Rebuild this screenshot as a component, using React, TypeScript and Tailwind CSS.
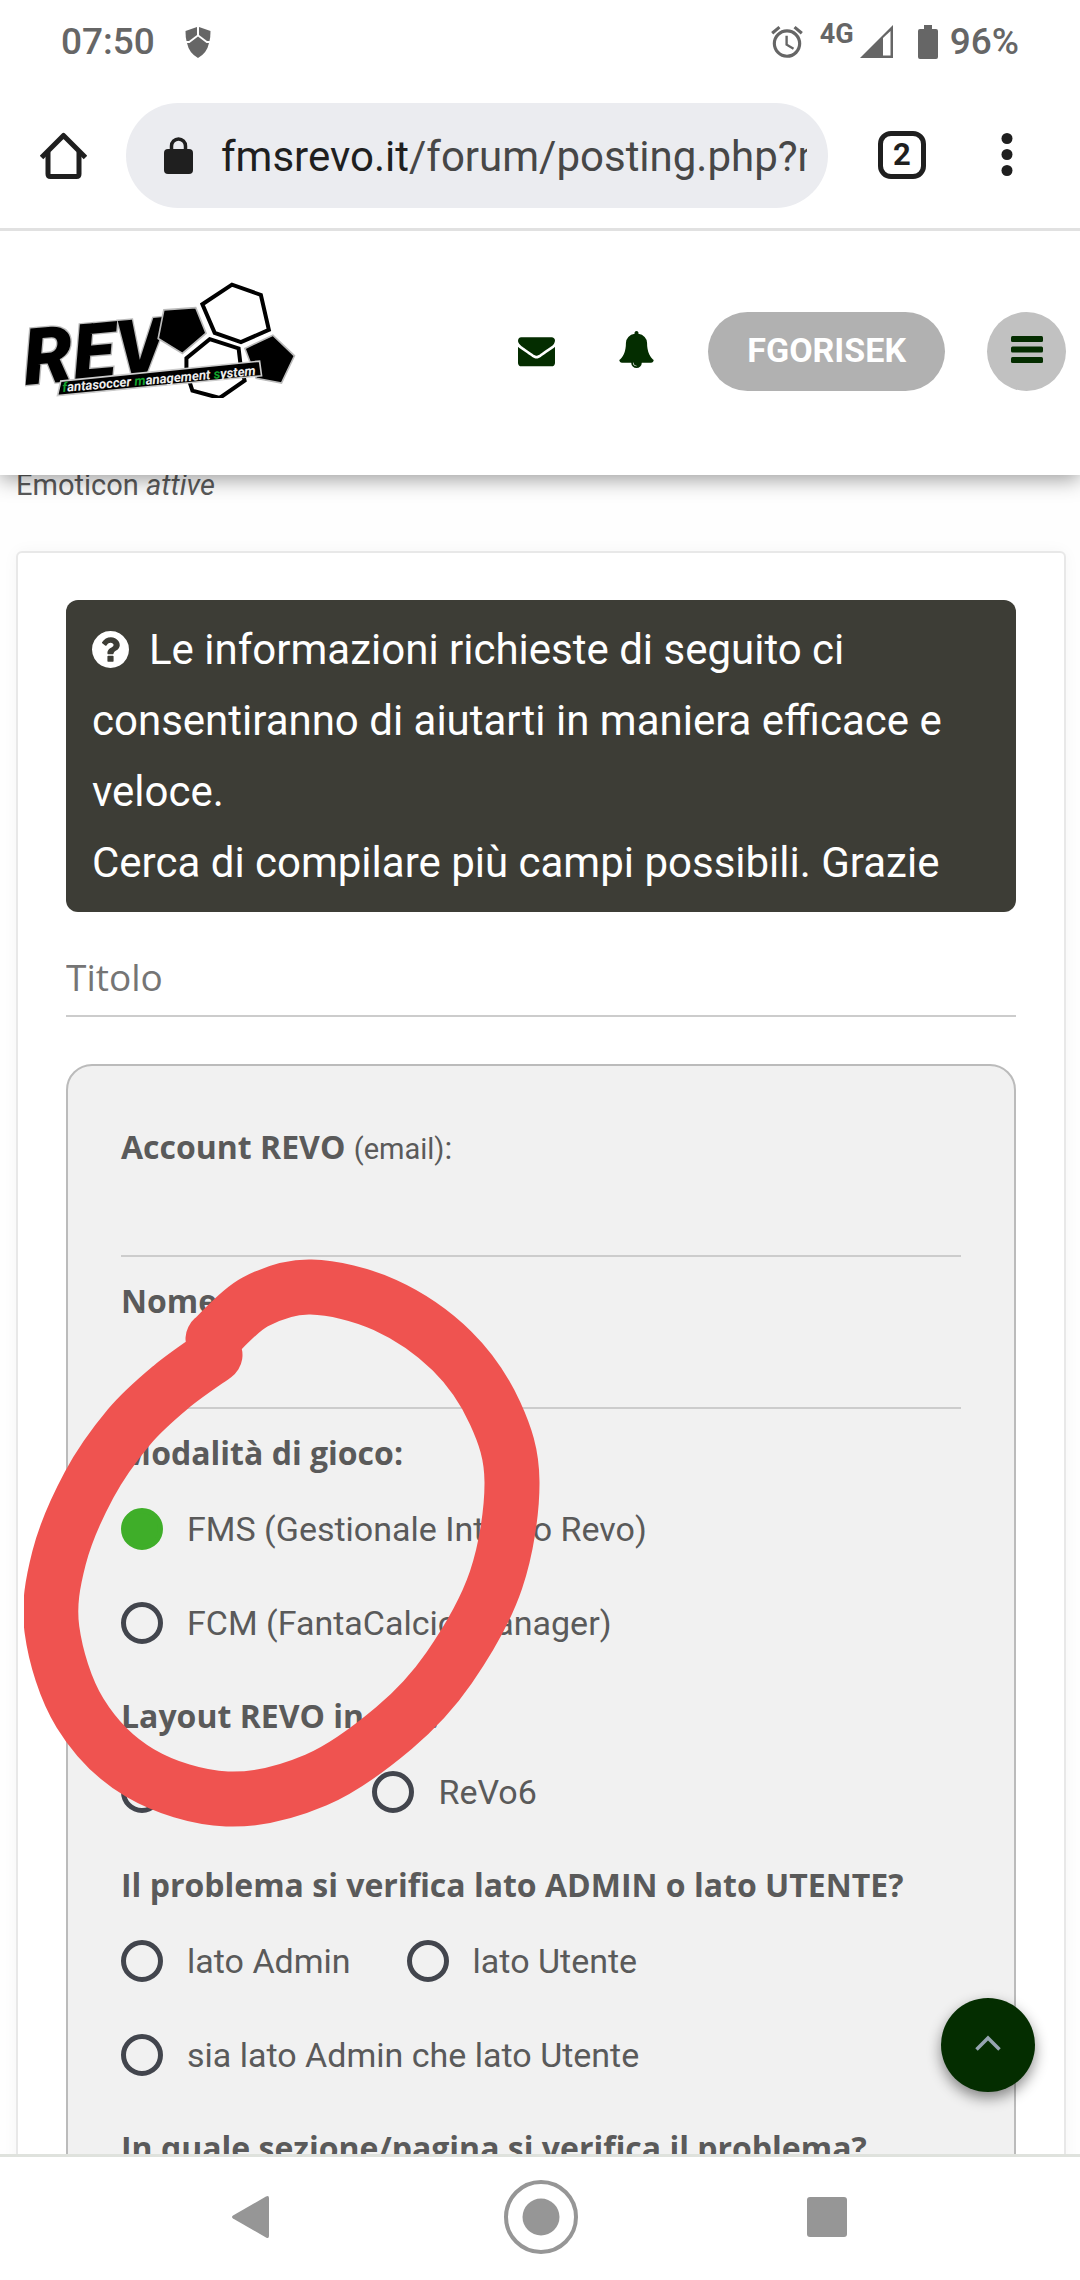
import React, { useState } from "react";
import { MdAlarm } from "react-icons/md";

const StatusBar = () => (
  <div className="flex h-[82px] shrink-0 items-center px-[61px] pt-0.5 text-[37px] leading-10 font-medium text-[#666]">
    <span>07:50</span>
    <svg className="ml-[30px] h-8 w-[26px]" viewBox="0 0 26 32" fill="currentColor">
      <path d="M12 1 L0.5 5 Q0.5 11 1.5 15 L4 15 L12 9Z" />
      <path d="M14 1 L25.500 5 Q25.500 11 24.500 15 L22 15 L14 9Z" />
      <path d="M2 17 L4.500 17 L13 10.500 L21.500 17 L24 17 Q22 27 13 32 Q4 27 2 17Z" />
    </svg>
    <MdAlarm className="ml-auto h-[38px] w-[38px]" />
    <span className="ml-3.5 pb-4 text-[27px] leading-7 font-bold">4G</span>
    <svg className="ml-1.5 h-[34px] w-[34px]" viewBox="0 0 34 34">
      <path d="M0 33 L33 0 V33Z" fill="currentColor" />
      <path d="M23 13 L30.500 6 V30.500 H23Z" fill="#fff" />
    </svg>
    <svg className="mr-3 ml-6 h-[34px] w-5" viewBox="0 0 20 34" fill="currentColor">
      <path d="M6 0h8v4h4a2 2 0 0 1 2 2v26a2 2 0 0 1-2 2H2a2 2 0 0 1-2-2V6a2 2 0 0 1 2-2h4z" />
    </svg>
    <span>96%</span>
  </div>
);

const BrowserBar = () => (
  <div className="relative z-20 flex h-[149px] shrink-0 items-center border-b-3 border-[#e1e1e1] bg-white pr-[67px] pl-10 text-[#1f1f1f]">
    <button aria-label="Home">
      <svg className="h-[47px] w-[47px]" viewBox="0 0 47 47" fill="none" stroke="currentColor" strokeWidth="5">
        <path d="M1.500 25.500 L23.500 3.500 L45.500 25.500" strokeLinejoin="round" />
        <path d="M8 20 V42 Q8 44.500 10.500 44.500 H36.500 Q39 44.500 39 42 V20" />
      </svg>
    </button>
    <button className="ml-[39px] flex h-[105px] min-w-0 flex-1 items-center rounded-full bg-[#ebecf0] pr-[21px] pl-[38px]">
      <svg className="h-[38px] w-[29px] shrink-0" viewBox="0 0 29 38">
        <rect x="0" y="13" width="29" height="25" rx="4" fill="currentColor" />
        <path d="M7.500 14 V10 a7 7 0 0 1 14 0 V14" fill="none" stroke="currentColor" strokeWidth="3.500" />
      </svg>
      <span className="ml-7 overflow-hidden pt-1 text-[42px] leading-[56px] whitespace-nowrap text-[#474747]">
        <span className="text-[#1f1f1f]">fmsrevo.it</span>/forum/posting.php?mode=post
      </span>
    </button>
    <button className="ml-[50px] flex h-12 w-12 items-center justify-center rounded-[13px] border-5 border-[#1f1f1f] text-[31px] leading-8 font-bold">
      2
    </button>
    <button aria-label="Menu" className="ml-[75px]">
      <svg className="h-12 w-3" viewBox="0 0 12 48" fill="currentColor">
        <circle cx="6" cy="7.500" r="5.500" />
        <circle cx="6" cy="23.500" r="5.500" />
        <circle cx="6" cy="39.500" r="5.500" />
      </svg>
    </button>
  </div>
);

const Logo = () => (
  <svg className="h-[117px] w-[273px]" viewBox="75 65 820 352" role="img" aria-label="REVO">
    {/* football panels */}
    <g fill="#fff" stroke="#000" strokeWidth="12">
      <path d="M608 135 L697 76 L784 107 L808 212 L724 249 L645 221Z" />
      <path d="M630 240 L717 268 L722 310 L735 365 L660 417 L578 395 L560 340 L560 297Z" />
    </g>
    <text
      transform="translate(76 378) rotate(-5)"
      fontFamily="Roboto, sans-serif"
      fontSize="236"
      fontWeight="900"
      fontStyle="italic"
      stroke="#bbb"
      strokeWidth="8"
      paintOrder="stroke"
    >
      REV
    </text>
    <g stroke="#bbb" strokeWidth="5">
      <path d="M492 152 L588 145 L619 222 L548 283 L475 238Z" />
      <path d="M736 268 L820 228 L885 290 L846 372 L770 358Z" />
    </g>
    <path d="M172 410 L182 366 L780 306 L786 350Z" fill="#000" stroke="#ccc" strokeWidth="5" />
    <text
      transform="translate(188 399) rotate(-5)"
      fontFamily="Roboto, sans-serif"
      fontSize="40"
      fontWeight="700"
      fontStyle="italic"
      fill="#eee"
    >
      <tspan fill="#12a32c">f</tspan>antasoccer <tspan fill="#12a32c">m</tspan>anagement{" "}
      <tspan fill="#12a32c">s</tspan>ystem
    </text>
  </svg>
);

const SiteHeader = () => (
  <header className="relative z-10 flex h-[244px] shrink-0 items-center bg-white pr-3.5 pb-1 pl-[25px] text-[#042d00] shadow-[0_4px_20px_rgba(0,0,0,0.4)]">
    <a href="#" className="pb-6">
      <Logo />
    </a>
    <div className="ml-auto flex items-center gap-[42px]">
      <a href="#" aria-label="Messaggi" className="mr-[22px] pb-0.5">
        <svg className="h-[37px] w-[37px]" viewBox="0 0 1792 1792" fill="currentColor">
          <path d="M1792 710v794q0 66-47 113t-113 47h-1472q-66 0-113-47t-47-113v-794q44 49 101 87 362 246 497 345 57 42 92.500 65.500t94.500 48 110 24.500h2q51 0 110-24.500t94.500-48 92.500-65.500q170-123 498-345 57-39 100-87zm0-294q0 79-49 151t-122 123q-376 261-468 325-10 7-42.500 31t-54 38.500-52 32.500-57.500 27-50 9h-2q-23 0-50-9t-57.500-27-52-32.500-54-38.500-42.500-31q-91-64-262-182.500t-205-142.500q-62-42-117-115.500t-55-136.500q0-78 41.500-130t118.500-52h1472q65 0 112.500 47t47.500 113z" />
        </svg>
      </a>
      <a href="#" aria-label="Notifiche" className="mr-3 pb-1">
        <svg className="h-[37px] w-[35px]" viewBox="64 0 1664 1792" fill="currentColor">
          <path d="M912 1696q0-16-16-16-59 0-101.500-42.500t-42.500-101.500q0-16-16-16t-16 16q0 73 51.500 124.500t124.500 51.500q16 0 16-16zm816-288q0 52-38 90t-90 38h-448q0 106-75 181t-181 75-181-75-75-181h-448q-52 0-90-38t-38-90q50-42 91-88t85-119.500 74.500-158.500 50-206 19.500-260q0-152 117-282.500t307-158.500q-8-19-8-39 0-40 28-68t68-28 68 28 28 68q0 20-8 39 190 28 307 158.500t117 282.500q0 139 19.500 260t50 206 74.500 158.500 85 119.500 91 88z" />
        </svg>
      </a>
      <button className="h-[79px] rounded-full bg-[#b1b1b1] px-[39px] pb-0.5 text-[34px] leading-10 font-bold text-white">
        FGORISEK
      </button>
      <button aria-label="Menu" className="flex h-[79px] w-[79px] items-center justify-center rounded-full bg-[#c1c1c1] pb-0.5">
        <svg className="h-7 w-8" viewBox="0 0 32 28" fill="currentColor">
          <rect width="32" height="6" y="0" rx="1.500" />
          <rect width="32" height="6" y="10.500" rx="1.500" />
          <rect width="32" height="6" y="21" rx="1.500" />
        </svg>
      </button>
    </div>
  </header>
);

const heading = "block font-['Open_Sans'] text-[32px] leading-[50px] font-bold";

type TextFieldProps = { id: string; label: string; hint?: string };

const TextField = ({ id, label, hint }: TextFieldProps) => (
  <div className="mb-[19px]">
    <label htmlFor={id} className={heading}>
      {label}
      {hint && (
        <>
          {" "}
          <span className="font-['Roboto'] font-normal">
            <small className="text-[29px]">({hint})</small>:
          </span>
        </>
      )}
    </label>
    <input id={id} type="text" className="block h-[83px] w-full border-b-2 border-[#ccc] bg-transparent text-[34px] outline-none" />
  </div>
);

type RadioGroupProps = { name: string; label: string; options: string[]; initial?: string };

const RadioGroup = ({ name, label, options, initial = "" }: RadioGroupProps) => {
  const [value, setValue] = useState(initial);

  return (
    <fieldset className="mb-[21px]">
      <legend className={`${heading} mb-1`}>{label}</legend>
      <div className="flex flex-wrap gap-x-14">
        {options.map((option) => (
          <label key={option} className="flex h-[94px] items-center gap-6 text-[34px] leading-10">
            <input
              type="radio"
              name={name}
              checked={value === option}
              onChange={() => setValue(option)}
              className="h-[42px] w-[42px] appearance-none rounded-full border-5 border-[#42454d] checked:border-[#3fae29] checked:bg-[#3fae29]"
            />
            {option}
          </label>
        ))}
      </div>
    </fieldset>
  );
};

const SupportForm = () => (
  <form className="mt-14 mr-3.5 ml-4 rounded-md border-2 border-[#e8e8e8] bg-white px-12 pt-[47px] shadow-[0_0_16px_rgba(0,0,0,0.04)]">
    <div className="rounded-xl bg-[#3d3d36] px-[26px] py-3.5 text-[42px] leading-[71px] text-white">
      <svg className="mr-5 inline-block h-[37px] w-[37px] align-[-4px]" viewBox="128 128 1536 1536" fill="currentColor">
        <path d="M1024 1376v-192q0-14-9-23t-23-9h-192q-14 0-23 9t-9 23v192q0 14 9 23t23 9h192q14 0 23-9t9-23zm256-672q0-88-55.500-163t-138.500-116-170-41q-243 0-371 213-15 24 8 42l132 100q7 6 19 6 16 0 25-12 53-68 86-92 34-24 86-24 48 0 85.500 26t37.500 59q0 38-20 61t-68 45q-63 28-115.500 86.500t-52.500 125.500v36q0 14 9 23t23 9h192q14 0 23-9t9-23q0-19 21.500-49.500t54.500-49.500q32-18 49-28.500t46-35 44.500-48 28-60.500 12.500-81zm384 192q0 209-103 385.500t-279.500 279.500-385.500 103-385.500-103-279.500-279.500-103-385.500 103-385.500 279.500-279.500 385.500-103 385.500 103 279.500 279.500 103 385.500z" />
      </svg>
      Le informazioni richieste di seguito ci consentiranno di aiutarti in maniera efficace e veloce.
      <br />
      Cerca di compilare più campi possibili. Grazie
    </div>
    <input
      type="text"
      aria-label="Titolo"
      placeholder="Titolo"
      className="mt-[26px] block h-[79px] w-full border-b-2 border-[#ccc] font-['Open_Sans'] text-[37px] outline-none placeholder:text-[#757575]"
    />
    <div className="mt-[47px] rounded-[26px] border-2 border-[#bbb] bg-[#f1f1f1] px-[53px] pt-14">
      <TextField id="account" label="Account REVO" hint="email" />
      <TextField id="lega" label="Nome Lega:" />
      <RadioGroup
        name="modalita"
        label="Modalità di gioco:"
        options={["FMS (Gestionale Interno Revo)", "FCM (FantaCalcio Manager)"]}
        initial="FMS (Gestionale Interno Revo)"
      />
      <RadioGroup name="layout" label="Layout REVO in uso:" options={["Classico", "ReVo6"]} />
      <RadioGroup
        name="lato"
        label="Il problema si verifica lato ADMIN o lato UTENTE?"
        options={["lato Admin", "lato Utente", "sia lato Admin che lato Utente"]}
      />
      <TextField id="sezione" label="In quale sezione/pagina si verifica il problema?" />
    </div>
  </form>
);

// points the marker passes through
const markerPoints = [
  [213, 1339], [255, 1302], [311, 1287], [385, 1305], [452, 1351], [495, 1413], [512, 1482],
  [496, 1580], [449, 1668], [394, 1728], [316, 1780], [227, 1799], [140, 1773],
  [80, 1713], [52, 1630], [59, 1558], [89, 1485], [129, 1427], [171, 1387], [215, 1355],
];

const smoothPath = (pts: number[][]) =>
  pts.slice(0, -1).reduce((d, p, i) => {
    const prev = pts[i - 1] ?? p;
    const next = pts[i + 1];
    const after = pts[i + 2] ?? next;
    const c1 = [p[0] + (next[0] - prev[0]) / 6, p[1] + (next[1] - prev[1]) / 6];
    const c2 = [next[0] - (after[0] - p[0]) / 6, next[1] - (after[1] - p[1]) / 6];
    return `${d} C${c1} ${c2} ${next}`;
  }, `M${pts[0]}`);

const MarkerCircle = () => (
  <svg className="pointer-events-none absolute top-[784px] left-6 h-[568px] w-[516px]" viewBox="24 1259 516 568">
    <path d={smoothPath(markerPoints)} fill="none" stroke="#ef5350" strokeWidth="55" strokeLinecap="round" strokeLinejoin="round" />
  </svg>
);

const NavigationBar = () => (
  <nav className="flex h-[126px] shrink-0 items-center justify-between border-t-3 border-[#dfe2dd] bg-white pr-[233px] pb-1 pl-[231px] text-[#969696]">
    <button aria-label="Indietro" className="w-11">
      <svg className="h-11 w-[38px]" viewBox="0 0 38 44" fill="currentColor">
        <path d="M2 20.500 L35 1.500 Q38 0 38 3 V41 Q38 44 35 42.500 L2 23.500 Q0 22 2 20.500Z" />
      </svg>
    </button>
    <button aria-label="Home">
      <svg className="h-[74px] w-[74px]" viewBox="0 0 74 74" fill="currentColor">
        <circle cx="37" cy="37" r="35" fill="none" stroke="currentColor" strokeWidth="4" />
        <circle cx="37" cy="37" r="18.500" />
      </svg>
    </button>
    <button aria-label="Recenti" className="h-10 w-10 rounded-[3px] bg-[#969696]" />
  </nav>
);

export default function App() {
  return (
    <div className="flex h-screen flex-col overflow-hidden bg-white font-['Roboto',sans-serif] text-[#5a5a5a]">
      <StatusBar />
      <BrowserBar />
      <SiteHeader />
      <main className="relative min-h-0 flex-1 overflow-hidden bg-[#fefefe]">
        <p className="pl-4 text-[29px] leading-5">
          Emoticon <em>attive</em>
        </p>
        <SupportForm />
        <MarkerCircle />
        <button
          aria-label="Torna su"
          className="absolute right-[45px] bottom-[62px] flex h-[94px] w-[94px] items-center justify-center rounded-full bg-[#042d00] pb-1 shadow-[0_6px_14px_rgba(0,0,0,0.45)]"
        >
          <svg className="h-4 w-[26px]" viewBox="0 0 26 16" fill="none" stroke="#96a5b0" strokeWidth="3.500">
            <path d="M1.500 14.500 L13 3 L24.500 14.500" />
          </svg>
        </button>
      </main>
      <NavigationBar />
    </div>
  );
}
